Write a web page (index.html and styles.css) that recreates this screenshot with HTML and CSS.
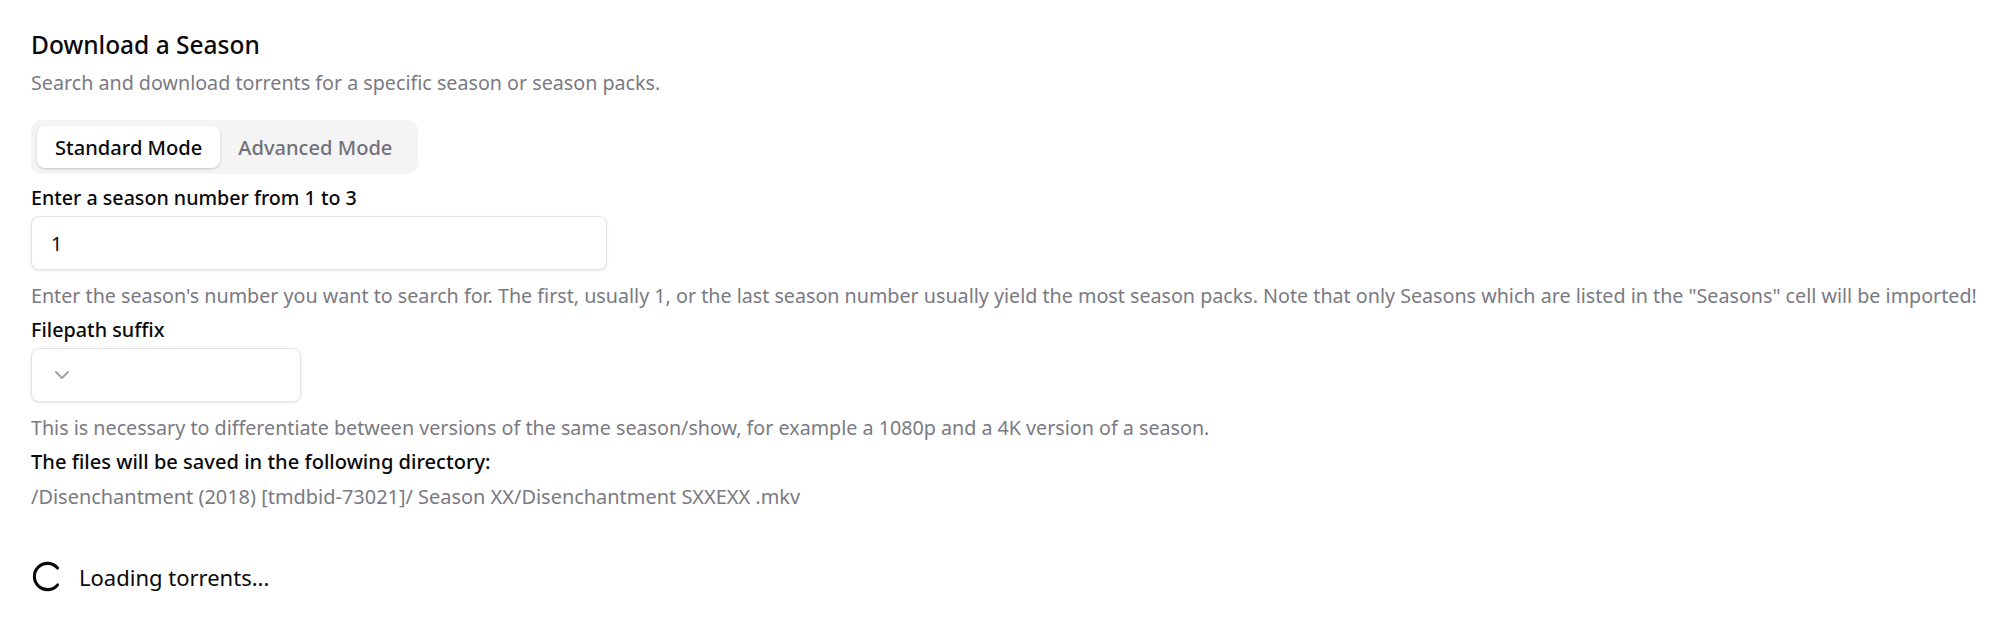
FILE: index.html
```html
<!DOCTYPE html>
<html lang="en">
<head>
<meta charset="utf-8">
<title>Download a Season</title>
<link rel="stylesheet" href="styles.css">
</head>
<body>
<main class="page">
  <h1 class="title">Download a Season</h1>
  <p class="muted desc">Search and download torrents for a specific season or season packs.</p>
  <div class="tabs">
    <button class="tab tab-active"><span class="tab-text">Standard Mode</span></button>
    <button class="tab"><span class="tab-text">Advanced Mode</span></button>
  </div>
  <label class="label label-first">Enter a season number from 1 to 3</label>
  <div class="field field-wide"><span class="value">1</span></div>
  <p class="muted help help-first">Enter the season's number you want to search for. The first, usually 1, or the last season number usually yield the most season packs. Note that only Seasons which are listed in the "Seasons" cell will be imported!</p>
  <label class="label label-next">Filepath suffix</label>
  <div class="field field-select">
    <svg class="chevron" viewBox="0 0 24 24" fill="none" stroke="currentColor" stroke-width="2" stroke-linecap="round" stroke-linejoin="round"><path d="m6 9 6 6 6-6"/></svg>
  </div>
  <p class="muted help help-second">This is necessary to differentiate between versions of the same season/show, for example a 1080p and a 4K version of a season.</p>
  <div class="label label-dir">The files will be saved in the following directory:</div>
  <p class="muted path">/Disenchantment (2018) [tmdbid-73021]/ Season XX/Disenchantment SXXEXX .mkv</p>
  <div class="loading">
    <svg class="spinner" viewBox="0 0 24 24" fill="none" stroke="currentColor" stroke-width="2.1" stroke-linecap="round" stroke-linejoin="round"><path d="M18.9 6.2A9 9 0 1 0 18.9 17.8"/></svg>
    <span class="loading-text">Loading torrents...</span>
  </div>
</main>
</body>
</html>
```
FILE: styles.css
```css
* { box-sizing: border-box; }
html, body { margin: 0; padding: 0; background: #fff; }
body { font-family: "Noto Sans", "Open Sans", sans-serif; color: #09090b; font-size: 19.7px; line-height: 26.67px; }
.page { padding: 29px 31px 0; display: flex; flex-direction: column; align-items: flex-start; white-space: nowrap; }
.title { margin: 0; font-size: 24.5px; line-height: 32px; font-weight: 500; }
.muted { margin: 0; color: #7a7a83; }
.desc { margin-top: 8.67px; }
.tabs { margin-top: 24px; height: 53.67px; width: 387px; padding: 6px; background: #f4f4f5; border-radius: 10.67px; display: flex; align-items: center; }
.tab { border: 0; background: transparent; font: inherit; font-size: 20.1px; font-weight: 500; color: #71717a; height: 42px; padding: 0 18px; border-radius: 8px; }
.tab-text { display: block; padding-top: 2px; }
.tab-active { background: #fff; color: #09090b; box-shadow: 0 1px 3px rgba(0,0,0,.12), 0 1px 2px rgba(0,0,0,.08); }
.label { font-size: 19.8px; font-weight: 500; color: #09090b; }
.label-first { margin-top: 10.67px; font-size: 19.65px; }
.label-next { margin-top: 7.33px; }
.label-dir { margin-top: 7.33px; font-size: 20.1px; }
.field { margin-top: 4.67px; height: 54px; border: 1.33px solid #e4e4e7; border-radius: 8px; background: #fff; box-shadow: 0 1px 3px rgba(0,0,0,.1); display: flex; align-items: center; padding: 0 19px; }
.field-wide { width: 576px; }
.value { padding-top: 2px; }
.field-select { width: 270px; padding-left: 18px; }
.help-first { margin-top: 12.67px; }
.help-second { margin-top: 12.67px; }
.path { margin-top: 8.33px; font-size: 19.95px; }
.chevron { width: 24px; height: 24px; color: #a1a1aa; }
.loading { margin-top: 48.67px; margin-left: -1px; display: flex; align-items: flex-start; gap: 14px; }
.spinner { width: 35px; height: 35px; color: #09090b; }
.loading-text { margin-top: 2px; font-size: 22px; line-height: 32px; }
```
